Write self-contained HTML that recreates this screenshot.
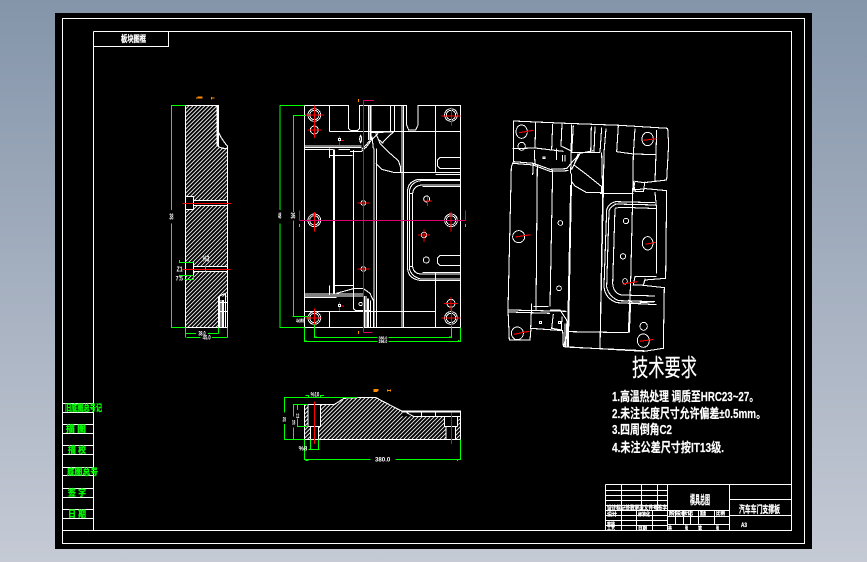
<!DOCTYPE html>
<html lang="zh">
<head>
<meta charset="utf-8">
<title>CAD</title>
<style>
html,body{margin:0;padding:0;width:867px;height:562px;overflow:hidden;background:#8f9db1}
svg{display:block;position:absolute;left:0;top:0}
.a{fill:none;stroke:#fff;stroke-width:3.2;shape-rendering:crispEdges}
.t{fill:none;stroke:#fff;stroke-width:1;shape-rendering:crispEdges}
.g{fill:none;stroke:#00ff00;stroke-width:3.2;shape-rendering:crispEdges}
.r{fill:none;stroke:#f00;stroke-width:3.2;shape-rendering:crispEdges}
.m{fill:none;stroke:#e0006c;stroke-width:3.2;shape-rendering:crispEdges}
.o{fill:none;stroke:#ff8a00;stroke-width:3.2;shape-rendering:crispEdges}
text{font-family:"Liberation Sans","Noto Sans CJK SC",sans-serif;font-weight:700}
.l{fill:#fff;font-size:20px}
.gt text{fill:#00ff00;font-size:9px;stroke:#00ff00;stroke-width:.35}
.req text{fill:#fff;stroke:#fff;stroke-width:.15}
.tb text{stroke:#fff;stroke-width:.25}
</style>
</head>
<body>
<svg width="867" height="562" viewBox="0 0 867 562" xmlns="http://www.w3.org/2000/svg">
<defs>
<linearGradient id="bg" x1="0" y1="0" x2="0" y2="1"><stop offset="0" stop-color="#8495aa"/><stop offset="1" stop-color="#c5cad5"/></linearGradient>
<pattern id="h" width="8.5" height="8.5" patternUnits="userSpaceOnUse" patternTransform="rotate(45)"><rect x="0" y="0" width="2.6" height="8.5" fill="#fff"/></pattern>
</defs>
<rect width="867" height="562" fill="url(#bg)"/>
<rect x="55" y="13" width="757" height="536" fill="#000"/>

<!-- frames -->
<g class="t">
<path d="M62.5 18.5H804.5V543.5H62.5Z"/>
<path d="M93.5 31.5H791.5V530.5H93.5"/>
<path d="M93.5 31.5V530.5"/>
<path d="M93.5 46.5H168.5V31.5"/>
<path d="M62.5 403.5H93.5M62.5 412.5H93.5M62.5 424.5H93.5M62.5 433.5H93.5M62.5 445.5H93.5M62.5 454.5H93.5M62.5 467.5H93.5M62.5 475.5H93.5M62.5 488.5H93.5M62.5 497.5H93.5M62.5 509.5H93.5M62.5 518.5H93.5M62.5 530.5H93.5"/>
</g>
<text x="121" y="42" font-size="9" fill="#fff" stroke="#fff" stroke-width=".3" textLength="25" lengthAdjust="spacingAndGlyphs">板块图框</text>
<g class="gt">
<text x="65" y="411" textLength="37" lengthAdjust="spacingAndGlyphs">旧底图总号记</text>
<text x="66" y="432" textLength="20" lengthAdjust="spacingAndGlyphs">描 图</text>
<text x="68" y="453" textLength="18" lengthAdjust="spacingAndGlyphs">描 校</text>
<text x="67" y="475" textLength="31" lengthAdjust="spacingAndGlyphs">底图总号</text>
<text x="68" y="496" textLength="18" lengthAdjust="spacingAndGlyphs">签 字</text>
<text x="68" y="517" textLength="18" lengthAdjust="spacingAndGlyphs">日 期</text>
</g>

<!-- View 1: section -->
<g transform="translate(160 90) scale(.3333)">
<path d="M76 47H175V125L182 140 196 158 202 175V712H76Z" fill="url(#h)"/>
<rect x="76" y="319" width="24" height="39" fill="#000"/>
<rect x="76" y="517" width="24" height="39" fill="#000"/>
<rect x="100" y="332" width="102" height="14" fill="#000"/>
<rect x="100" y="530" width="102" height="14" fill="#000"/>
<rect x="177" y="47" width="30" height="125" fill="#000"/>
<rect x="176" y="620" width="26" height="92" fill="#000"/>
<g class="a">
<path d="M76 47H175V170L192 176 202 176V712H76Z"/>
<path d="M174 47V170M171 47V170M175 125L182 140 194 158 202 168V178"/>
<path d="M76 319H100V358H76M100 331H202M100 346H202"/>
<path d="M76 517H100V556H76M100 530H202M100 545H202"/>
<path d="M175 620V712M178 620V712M183 630V712M187 630V712M190 630V712M196 610V712M176 638H202M176 664H202M176 620L196 610"/>
</g>
<g class="g">
<path d="M76 46H35V360M35 400V712H76"/>
<path d="M76 712V743M202 712V743M175 712V730M76 730H108M144 730H175M80 743H122M156 743H202"/>
<path d="M100 517H58V510M100 556H58V562M100 568H74M100 556V568M136 525V545"/>
</g>
<g class="r"><path d="M68 340H215M68 538H212"/></g>
<g class="o"><path d="M108 24H128M112 21H128M153 24H164M155 21V29"/></g>
<text class="l" x="28" y="388" style="font-size:24px" textLength="12" lengthAdjust="spacingAndGlyphs">38</text>
<text class="l" x="115" y="736" textLength="22" lengthAdjust="spacingAndGlyphs">38.0</text>
<text class="l" x="128" y="748" textLength="24" lengthAdjust="spacingAndGlyphs">45.0</text>
<text class="l" x="128" y="514" style="font-size:26px" textLength="20" lengthAdjust="spacingAndGlyphs">%3</text>
<text class="l" x="50" y="545" style="font-size:22px" textLength="18" lengthAdjust="spacingAndGlyphs">Z1</text>
<text class="l" x="47" y="572" textLength="22" lengthAdjust="spacingAndGlyphs">7.5</text>
</g>

<!-- View 2: plan -->
<g transform="translate(270 90) scale(.3333)">
<g class="a">
<path d="M103 46V712H572V46H444V105L437 120H416L410 105V46H268V116L262 122H243L236 116V46Z"/>
<path d="M178 124H572M178 46V124M496 46V248M178 665V712M496 665V712M103 665H496V548"/>
<path d="M572 203H510L502 210V228L510 236H572M572 497H510L502 505V518L510 526H572"/>
<path d="M362 46V124M374 46V124M396 46V712M400 46V712M296 46V150M300 46V150M303 46V150M312 175V712M320 175V712"/>
<path d="M103 168H275M103 173H275M103 178H190M178 176V204M190 178V612M194 178V612M178 196H248M250 180V656L258 662H300"/>
<path d="M205 178H240M240 184H275L290 170 306 148 325 130M275 178L300 152M306 140L310 175M330 125L370 126 335 160M316 126L330 160 360 190 385 212 392 232V247H370L335 238 318 220M370 247H496"/>
<path d="M303 128H340M325 148L340 160"/>
<path d="M272 136Q266 146 272 158 278 146 272 136Z"/>
<path d="M572 268H448Q416 272 413 300V538Q416 565 448 571H572M572 272H452Q423 276 418 304V534Q423 560 452 567H572"/>
<path d="M572 285H455Q431 288 428 310V530Q431 552 455 552H572M572 290H458M572 548H458M428 310H418M428 530H418"/>
<path d="M496 248H572M496 254H572M496 548V578"/>
<path d="M103 612H280M103 618H280M103 622H200M178 587V615M190 587H250M200 610L250 596H280L300 610 310 632V712M280 618V712M284 618V712M288 618V712M292 625V712M296 625V712M302 632V712M250 620V656M312 632V712"/>
<path d="M190 587V612M194 587V612"/>
</g>
<g class="a" style="stroke-width:2.8">
<circle cx="133" cy="75" r="19"/><circle cx="133" cy="75" r="14"/>
<circle cx="133" cy="120" r="12"/>
<circle cx="133" cy="391" r="19"/><circle cx="133" cy="391" r="14"/>
<circle cx="133" cy="684" r="19"/><circle cx="133" cy="684" r="14"/>
<circle cx="543" cy="75" r="19"/><circle cx="543" cy="75" r="14"/>
<circle cx="543" cy="391" r="19"/><circle cx="543" cy="391" r="14"/>
<circle cx="543" cy="684" r="19"/><circle cx="543" cy="684" r="14"/>
<circle cx="543" cy="640" r="12"/>
<circle cx="470" cy="327" r="9"/><circle cx="462" cy="435" r="8"/><circle cx="469" cy="510" r="9"/>
<circle cx="280" cy="339" r="7"/><circle cx="280" cy="537" r="7"/>
<circle cx="272" cy="642" r="5"/>
</g>
<g class="r">
<path d="M105 75H162M133 47V105M112 120H154M133 99V144M105 391H190M133 366V424M105 684H156M133 656V712"/>
<path d="M514 78H572M545 52V107M514 391H572M543 366V424M514 684H572M545 656V707M522 640H564M543 621V661"/>
<path d="M463 333H486M472 320V348M444 435H480M462 418V456M262 339H298M280 326V354M262 537H298M280 524V552M208 138V165M208 151H222M208 636V663M208 648H222"/>
</g>
<g class="a" style="fill:#000"><rect x="205" y="145" width="7" height="7"/><rect x="205" y="643" width="7" height="7"/></g>
<g class="m">
<path d="M88 391H587M88 361V391M587 361V391M280 30V728M280 31H312M280 727H308"/>
</g>
<g class="o"><path d="M265 27V36M265 723V732M88 402V411M586 402V411"/></g>
<g class="g">
<path d="M103 46H30V360M30 400V712H103M30 46V52M30 712V706"/>
<path d="M108 76H70V366M70 392V680H115M70 680H68"/>
<path d="M103 712V755H322M356 755H572V712M133 704V742H322M356 742H545V708M108 750V755M566 750V755M138 738V742M540 738V742"/>
</g>
<text class="l" x="24" y="386" style="font-size:24px" textLength="10" lengthAdjust="spacingAndGlyphs">48</text>
<text class="l" x="62" y="386" style="font-size:24px" textLength="14" lengthAdjust="spacingAndGlyphs">36</text>
<text class="l" x="326" y="749" style="font-size:14px" textLength="26" lengthAdjust="spacingAndGlyphs">386.0</text>
<text class="l" x="326" y="759" style="font-size:14px" textLength="26" lengthAdjust="spacingAndGlyphs">296.0</text>
<text class="l" x="78" y="698" style="font-size:16px" textLength="24" lengthAdjust="spacingAndGlyphs">4xM8</text>
</g>

<!-- View 3: iso -->
<g transform="translate(500 110) scale(.3333)">
<g class="a">
<path d="M40 33L200 40 360 46 503 55 506 103 500 210 432 218 405 214 400 240 437 236 500 242 497 505 435 510 430 526 493 533 490 715 432 724 190 710 188 662 93 655 90 690 28 690 24 598 34 170 40 156Z"/>
<path d="M107 38L105 114 38 116M105 114L190 124M158 42L155 118M186 40L183 108 212 122M215 44L212 190M220 46L215 128H300M274 50L272 128M285 50L282 128M305 52L300 128M355 48L350 125 400 132 470 134M405 56L400 132 398 260 392 515 385 668M470 60L468 130 465 216"/>
<path d="M40 155L100 160 150 178 200 176 215 158 240 130 280 122M38 160L100 165 150 184 205 182M100 162L98 195M112 165L108 600M158 180L150 590M240 130L215 178M235 130L222 165 255 190 305 230V248H260L225 228 215 215"/>
<path d="M300 250L400 250M305 128L308 250 300 715M318 56L312 128 310 250 305 480 300 715M215 190L205 712M212 225L202 712"/>
<path d="M347 275L465 278M343 282L470 285M470 285V290M320 300Q325 280 347 275M327 303Q332 288 350 282M320 300L312 530Q315 565 350 578L470 584M327 303L320 530Q325 558 355 572L465 575M345 295Q350 290 470 296M345 295L338 520Q340 550 365 555L465 558M385 570L400 580 465 575M465 246L470 300V490"/>
<path d="M400 213L405 245H430L435 215M470 500H405L400 525H430L436 505"/>
<path d="M24 600L200 604M26 606L150 610M95 580L92 655 188 662M100 590H145M150 600H180L200 630 205 660 190 710M195 640V712M200 640L198 712M160 612L155 655 185 660M186 620L184 660M205 665L385 668M210 712L300 716 432 722M392 578L388 668"/>
<path d="M103 120L105 165M170 115V150M187 135V155M195 135V155"/>
</g>
<g class="a" style="stroke-width:2.8">
<ellipse cx="65" cy="65" rx="17" ry="20"/>
<ellipse cx="65" cy="109" rx="11" ry="12"/>
<ellipse cx="56" cy="380" rx="18" ry="18"/>
<ellipse cx="52" cy="670" rx="18" ry="19"/>
<ellipse cx="443" cy="87" rx="17" ry="20"/>
<ellipse cx="443" cy="400" rx="16" ry="20"/>
<ellipse cx="431" cy="649" rx="11" ry="12"/>
<ellipse cx="430" cy="692" rx="18" ry="20"/>
<circle cx="378" cy="333" r="8"/><circle cx="369" cy="439" r="8"/><ellipse cx="375" cy="514" rx="7" ry="8"/>
<circle cx="181" cy="339" r="7"/><circle cx="177" cy="535" r="7"/>
<rect x="129" y="141" width="6" height="4"/><rect x="118" y="635" width="6" height="5"/><rect x="176" y="635" width="6" height="5"/>
</g>
<g class="r">
<path d="M57 68L100 61M46 381L92 374M42 673L87 664M430 91L470 86M436 403L468 397M420 694L461 688M368 522L412 515"/>
</g>
</g>

<!-- View 4: lower section -->
<g transform="translate(270 380) scale(.3333)">
<path d="M103 73H195L215 60 260 52H318L395 93H572V178H103Z" fill="url(#h)"/>
<rect x="114" y="73" width="38" height="66" fill="#000"/>
<rect x="121" y="139" width="24" height="39" fill="#000"/>
<rect x="397" y="93" width="175" height="16" fill="#000"/>
<rect x="523" y="109" width="42" height="30" fill="#000"/>
<rect x="528" y="139" width="28" height="39" fill="#000"/>
<g class="a">
<path d="M103 73V178H572V93H395L360 75 318 53H262L222 55 195 72 195 73H103"/>
<path d="M114 73V139H152V73M121 139V178M145 139V178"/>
<path d="M395 96H572M410 98L430 109H572M455 96V109M497 96V109M563 109V139M523 109V139H563M528 139V178M556 139V178"/>
</g>
<g class="g">
<path d="M103 52H43V98M43 132V178H103M103 52H262M115 52V46H106M152 52V46H162"/>
<path d="M114 73H70V110M70 142V178M82 73V90M82 116V139H114"/>
<path d="M121 178V208H145V178M115 208H148"/>
<path d="M103 178V239H302M376 239H572V178M108 239V242H116M562 239V243"/>
</g>
<g class="r"><path d="M133 64V192M544 98V192"/></g>
<g class="o"><path d="M310 28H326M310 31H326M310 34H322M352 28V35M362 28V35M352 31H362"/></g>
<text class="l" x="315" y="245" style="font-size:18px" textLength="46" lengthAdjust="spacingAndGlyphs">380.0</text>
<text class="l" x="38" y="124" textLength="10" lengthAdjust="spacingAndGlyphs">28</text>
<text class="l" x="66" y="134" textLength="10" lengthAdjust="spacingAndGlyphs">18</text>
<text class="l" x="78" y="114" textLength="10" lengthAdjust="spacingAndGlyphs">12</text>
<text class="l" x="122" y="50" style="font-size:18px" textLength="26" lengthAdjust="spacingAndGlyphs">%10</text>
<text class="l" x="86" y="212" style="font-size:18px" textLength="26" lengthAdjust="spacingAndGlyphs">%8</text>
</g>

<!-- Technical requirements -->
<g class="req">
<text x="632" y="376" font-size="24" style="font-weight:400" textLength="65" lengthAdjust="spacingAndGlyphs">技术要求</text>
<text x="612" y="401" font-size="13" textLength="147" lengthAdjust="spacingAndGlyphs">1.高温热处理 调质至HRC23~27。</text>
<text x="612" y="418" font-size="13" textLength="154" lengthAdjust="spacingAndGlyphs">2.未注长度尺寸允许偏差±0.5mm。</text>
<text x="612" y="434" font-size="13" textLength="60" lengthAdjust="spacingAndGlyphs">3.四周倒角C2</text>
<text x="612" y="452" font-size="13" textLength="112" lengthAdjust="spacingAndGlyphs">4.未注公差尺寸按IT13级.</text>
</g>

<!-- Title block -->
<g class="t">
<path d="M605.5 484.5H791.5M605.5 484.5V530.5M667.5 484.5V530.5M729.5 484.5V530.5"/>
<path d="M729.5 499.5H791.5M729.5 515.5H791.5"/>
<path d="M667.5 510.5H729.5M667.5 516.5H729.5M667.5 524.5H729.5"/>
<path d="M675.5 510.5V524.5M683.5 510.5V524.5M690.5 510.5V524.5M698.5 510.5V524.5M714.5 510.5V524.5"/>
<path d="M605.5 490.5H667.5M605.5 495.5H667.5M605.5 500.5H667.5M605.5 505.5H667.5M605.5 510.5H667.5M605.5 515.5H667.5M605.5 520.5H667.5M605.5 525.5H667.5"/>
<path d="M621.5 484.5V530.5M641.5 484.5V510.5M657.5 484.5V510.5M636.5 510.5V530.5M652.5 510.5V530.5"/>
</g>
<g fill="#fff" class="tb">
<text x="690" y="504" font-size="12" textLength="20" lengthAdjust="spacingAndGlyphs">模具总图</text>
<text x="739" y="513" font-size="10" textLength="41" lengthAdjust="spacingAndGlyphs">汽车车门支撑板</text>
<text x="741" y="527" font-size="6" textLength="6" lengthAdjust="spacingAndGlyphs">A3</text>
<text x="607" y="510" font-size="6" textLength="60" lengthAdjust="spacingAndGlyphs">设计标记处数更改文件号签字</text>
<text x="607" y="516" font-size="5" textLength="10" lengthAdjust="spacingAndGlyphs">设计</text>
<text x="638" y="516" font-size="5" textLength="12" lengthAdjust="spacingAndGlyphs">标准化</text>
<text x="607" y="526" font-size="5" textLength="8" lengthAdjust="spacingAndGlyphs">审核</text>
<text x="607" y="530" font-size="5" textLength="8" lengthAdjust="spacingAndGlyphs">工艺</text>
<text x="638" y="530" font-size="5" textLength="9" lengthAdjust="spacingAndGlyphs">日期</text>
<text x="669" y="515" font-size="5" textLength="24" lengthAdjust="spacingAndGlyphs">阶段标记</text>
<text x="700" y="515" font-size="5" textLength="6" lengthAdjust="spacingAndGlyphs">重量</text>
<text x="716" y="515" font-size="5" textLength="9" lengthAdjust="spacingAndGlyphs">比例</text>
<text x="668" y="530" font-size="5" textLength="4" lengthAdjust="spacingAndGlyphs">共</text>
<text x="685" y="530" font-size="5" textLength="3" lengthAdjust="spacingAndGlyphs">张</text>
<text x="698" y="530" font-size="5" textLength="4" lengthAdjust="spacingAndGlyphs">第</text>
<text x="716" y="530" font-size="5" textLength="3" lengthAdjust="spacingAndGlyphs">张</text>
</g>
</svg>
</body>
</html>
